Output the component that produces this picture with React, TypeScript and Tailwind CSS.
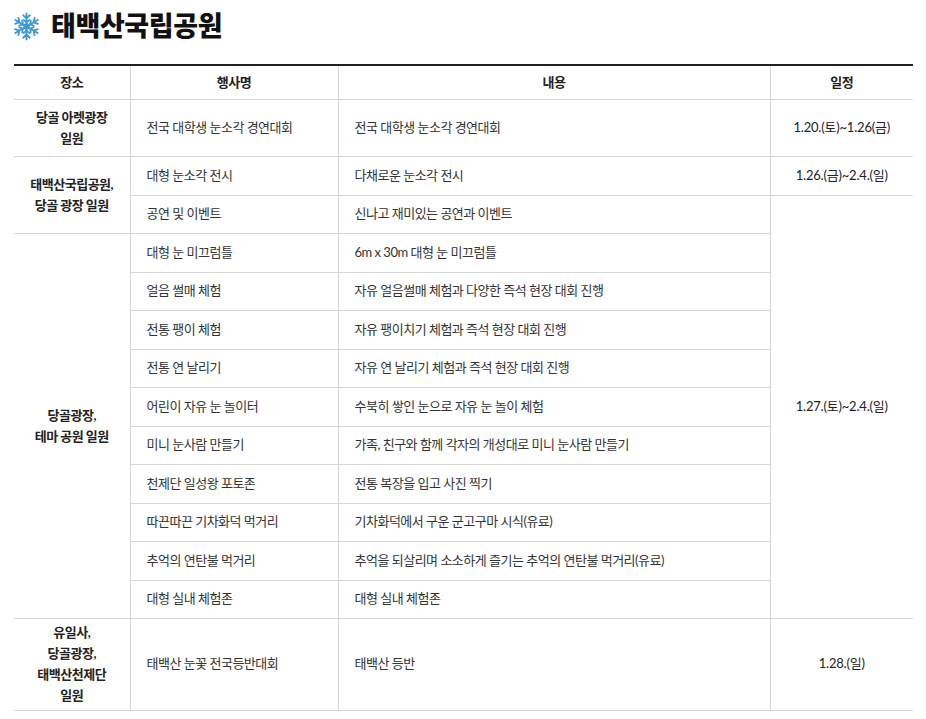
import React from "react"

type Row = {
  place?: string[]
  placeSpan?: number
  name: string
  desc: string
  date?: string
  dateSpan?: number
  h: string
}

const rows: Row[] = [
  {
    place: ["당골 아렛광장", "일원"],
    placeSpan: 1,
    name: "전국 대학생 눈소각 경연대회",
    desc: "전국 대학생 눈소각 경연대회",
    date: "1.20.(토)~1.26(금)",
    dateSpan: 1,
    h: "h-[57px]",
  },
  {
    place: ["태백산국립공원,", "당골 광장 일원"],
    placeSpan: 2,
    name: "대형 눈소각 전시",
    desc: "다채로운 눈소각 전시",
    date: "1.26.(금)~2.4.(일)",
    dateSpan: 1,
    h: "h-[39px]",
  },
  {
    name: "공연 및 이벤트",
    desc: "신나고 재미있는 공연과 이벤트",
    date: "1.27.(토)~2.4.(일)",
    dateSpan: 11,
    h: "h-[38px]",
  },
  {
    place: ["당골광장,", "테마 공원 일원"],
    placeSpan: 10,
    name: "대형 눈 미끄럼틀",
    desc: "6m x 30m 대형 눈 미끄럼틀",
    h: "h-[39px]",
  },
  { name: "얼음 썰매 체험", desc: "자유 얼음썰매 체험과 다양한 즉석 현장 대회 진행", h: "h-[38px]" },
  { name: "전통 팽이 체험", desc: "자유 팽이치기 체험과 즉석 현장 대회 진행", h: "h-[39px]" },
  { name: "전통 연 날리기", desc: "자유 연 날리기 체험과 즉석 현장 대회 진행", h: "h-[38px]" },
  { name: "어린이 자유 눈 놀이터", desc: "수북히 쌓인 눈으로 자유 눈 놀이 체험", h: "h-[39px]" },
  { name: "미니 눈사람 만들기", desc: "가족, 친구와 함께 각자의 개성대로 미니 눈사람 만들기", h: "h-[38px]" },
  { name: "천제단 일성왕 포토존", desc: "전통 복장을 입고 사진 찍기", h: "h-[39px]" },
  { name: "따끈따끈 기차화덕 먹거리", desc: "기차화덕에서 구운 군고구마 시식(유료)", h: "h-[38px]" },
  { name: "추억의 연탄불 먹거리", desc: "추억을 되살리며 소소하게 즐기는 추억의 연탄불 먹거리(유료)", h: "h-[39px]" },
  { name: "대형 실내 체험존", desc: "대형 실내 체험존", h: "h-[38px]" },
  {
    place: ["유일사,", "당골광장,", "태백산천제단", "일원"],
    placeSpan: 1,
    name: "태백산 눈꽃 전국등반대회",
    desc: "태백산 등반",
    date: "1.28.(일)",
    dateSpan: 1,
    h: "h-[92px]",
  },
]

function Snowflake() {
  const arms = [0, 60, 120, 180, 240, 300]
  return (
    <svg width="29" height="29" viewBox="0 0 28 28" fill="none">
      <g stroke="#3d97d6" strokeWidth="1.8" strokeLinecap="round" strokeLinejoin="round">
        {arms.map((a) => (
          <g key={a} transform={`rotate(${a} 14 14)`}>
            <path d="M14 14V1.5" />
            <path d="M10.8 3.2L14 6L17.2 3.2" />
            <path d="M11.2 7.6L14 10L16.8 7.6" />
          </g>
        ))}
        <circle cx="14" cy="14" r="2.2" fill="#3d97d6" />
      </g>
    </svg>
  )
}

export default function App() {
  return (
    <div
      className="w-[926px] h-[719px] bg-white text-[#333] px-[14px] overflow-hidden"
      style={{ fontFamily: "Lato, 'Noto Sans CJK KR', sans-serif" }}
    >
      <div className="flex items-center gap-[10px] h-[52px] pt-[1px] -ml-[2px]">
        <Snowflake />
        <h1 className="text-[27px] font-extrabold text-[#111] tracking-[-0.4px]">태백산국립공원</h1>
      </div>
      <table className="mt-[12px] w-[899px] table-fixed border-collapse border-t-2 border-[#222] text-[13px] tracking-[-0.5px]">
        <colgroup>
          <col className="w-[116px]" />
          <col className="w-[208px]" />
          <col className="w-[432px]" />
          <col className="w-[143px]" />
        </colgroup>
        <thead>
          <tr className="h-[34px] font-bold text-[#222]">
            <th className="border-b border-[#d6d6d6]">장소</th>
            <th className="border-b border-l border-[#d6d6d6]">행사명</th>
            <th className="border-b border-l border-[#d6d6d6]">내용</th>
            <th className="border-b border-l border-[#d6d6d6]">일정</th>
          </tr>
        </thead>
        <tbody>
          {rows.map((r, i) => (
            <tr key={i} className={r.h}>
              {r.place && (
                <td
                  rowSpan={r.placeSpan}
                  className="border-b border-[#d6d6d6] text-center font-bold text-[#222] leading-[21px]"
                >
                  {r.place.map((p) => (
                    <div key={p}>{p}</div>
                  ))}
                </td>
              )}
              <td className="border-b border-l border-[#d6d6d6] pl-[16px]">{r.name}</td>
              <td className="border-b border-l border-[#d6d6d6] pl-[16px]">{r.desc}</td>
              {r.date && (
                <td
                  rowSpan={r.dateSpan}
                  className="border-b border-l border-[#d6d6d6] text-center text-[13px] tracking-[-0.2px] text-[#222]"
                >
                  {r.date}
                </td>
              )}
            </tr>
          ))}
        </tbody>
      </table>
    </div>
  )
}
